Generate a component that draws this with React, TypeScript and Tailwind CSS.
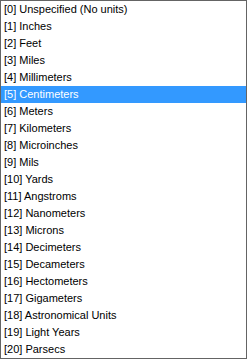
import React from "react";

const items = [
  "[0] Unspecified (No units)",
  "[1] Inches",
  "[2] Feet",
  "[3] Miles",
  "[4] Millimeters",
  "[5] Centimeters",
  "[6] Meters",
  "[7] Kilometers",
  "[8] Microinches",
  "[9] Mils",
  "[10] Yards",
  "[11] Angstroms",
  "[12] Nanometers",
  "[13] Microns",
  "[14] Decimeters",
  "[15] Decameters",
  "[16] Hectometers",
  "[17] Gigameters",
  "[18] Astronomical Units",
  "[19] Light Years",
  "[20] Parsecs",
];

export default function App() {
  return (
    <div
      className="w-[247px] h-[359px] border border-[#646464] bg-white flex flex-col"
      style={{ fontFamily: "'Liberation Sans', Arial, sans-serif" }}
    >
      {items.map((t, i) => (
        <div
          key={i}
          className={
            i === 5
              ? "h-[17px] shrink-0 flex items-center pl-[3px] text-[11px] leading-none bg-[#3399ff] text-white whitespace-nowrap"
              : "h-[17px] shrink-0 flex items-center pl-[3px] text-[11px] leading-none text-black whitespace-nowrap"
          }
        >
          {t}
        </div>
      ))}
    </div>
  );
}
